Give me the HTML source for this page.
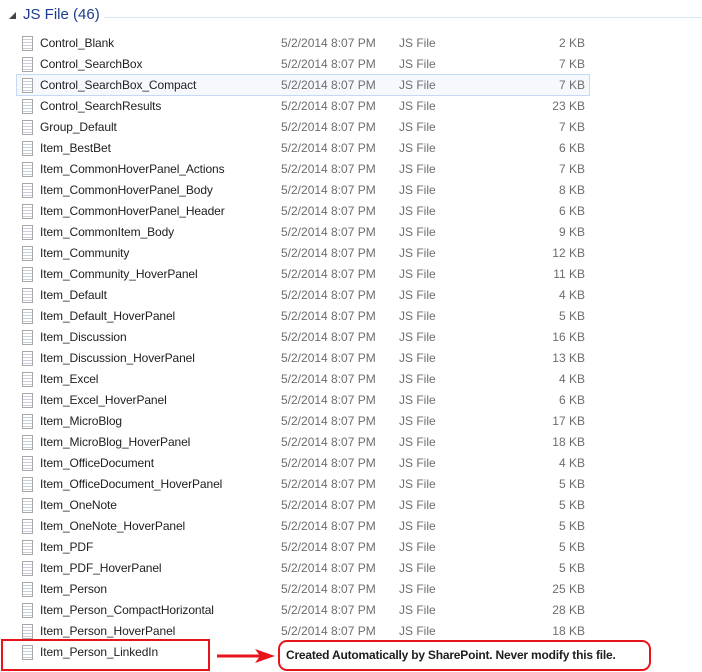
<!DOCTYPE html>
<html><head><style>
body{margin:0;width:702px;height:672px;background:#fff;position:relative;overflow:hidden;font-family:"Segoe UI","Liberation Sans",sans-serif;font-size:12px;color:#1e1e1e}
.hdr{position:absolute;left:23px;top:6px;font-size:15px;color:#1e3c8c}
.tri{position:absolute;left:9px;top:12px;width:0;height:0;border-left:7px solid transparent;border-bottom:7px solid #444}
.hl{position:absolute;left:104px;right:0;top:17px;border-top:1px solid #dce6f0}
.row{position:absolute;left:0;width:702px;height:21px;line-height:21px}
.row .ic{position:absolute;left:22px;top:3px;width:11px;height:15px;border:1px solid #a8a8a8;background:repeating-linear-gradient(#fff 0 2px,#c8d0dc 2px 3px);box-sizing:border-box}
.row .n{position:absolute;left:40px;letter-spacing:-0.1px}
.row .d{position:absolute;left:281px;color:#6d6d6d}
.row .t{position:absolute;left:399px;color:#6d6d6d}
.row .s{position:absolute;right:117px;color:#6d6d6d}
.sel{position:absolute;left:16px;top:74px;width:572px;height:20px;border:1px solid #c4d9f3;background:#f5f9fe}
.rb{position:absolute;left:1px;top:639px;width:205px;height:28px;border:2px solid #e8141c}
.cb{position:absolute;left:278px;top:640px;border:2px solid #e8141c;border-radius:9px;font-family:"Liberation Sans",sans-serif;font-weight:bold;font-size:12px;letter-spacing:-0.2px;line-height:27px;padding-left:6px;box-sizing:border-box;width:373px;height:31px}
</style></head><body>
<div class="tri"></div><div class="hdr">JS File (46)</div><div class="hl"></div>
<div class="sel"></div>
<div id="rows"></div>
<div class="rb"></div>
<svg style="position:absolute;left:215px;top:648px" width="64" height="18"><line x1="2" y1="8" x2="46" y2="8" stroke="#e8141c" stroke-width="3"/><polygon points="40,1 60,8 40,15 45,8" fill="#e8141c"/></svg>
<div class="cb">Created Automatically by SharePoint. Never modify this file.</div>
<script>
var d=[["Control_Blank",2],["Control_SearchBox",7],["Control_SearchBox_Compact",7],["Control_SearchResults",23],["Group_Default",7],["Item_BestBet",6],["Item_CommonHoverPanel_Actions",7],["Item_CommonHoverPanel_Body",8],["Item_CommonHoverPanel_Header",6],["Item_CommonItem_Body",9],["Item_Community",12],["Item_Community_HoverPanel",11],["Item_Default",4],["Item_Default_HoverPanel",5],["Item_Discussion",16],["Item_Discussion_HoverPanel",13],["Item_Excel",4],["Item_Excel_HoverPanel",6],["Item_MicroBlog",17],["Item_MicroBlog_HoverPanel",18],["Item_OfficeDocument",4],["Item_OfficeDocument_HoverPanel",5],["Item_OneNote",5],["Item_OneNote_HoverPanel",5],["Item_PDF",5],["Item_PDF_HoverPanel",5],["Item_Person",25],["Item_Person_CompactHorizontal",28],["Item_Person_HoverPanel",18],["Item_Person_LinkedIn",null]];
var h="";d.forEach(function(r,i){h+='<div class="row" style="top:'+(33+i*21)+'px"><div class="ic"></div><span class="n">'+r[0]+'</span>'+(r[1]?'<span class="d">5/2/2014 8:07 PM</span><span class="t">JS File</span><span class="s">'+r[1]+' KB</span>':'')+'</div>';});
document.getElementById("rows").innerHTML=h;
</script>
</body></html>
